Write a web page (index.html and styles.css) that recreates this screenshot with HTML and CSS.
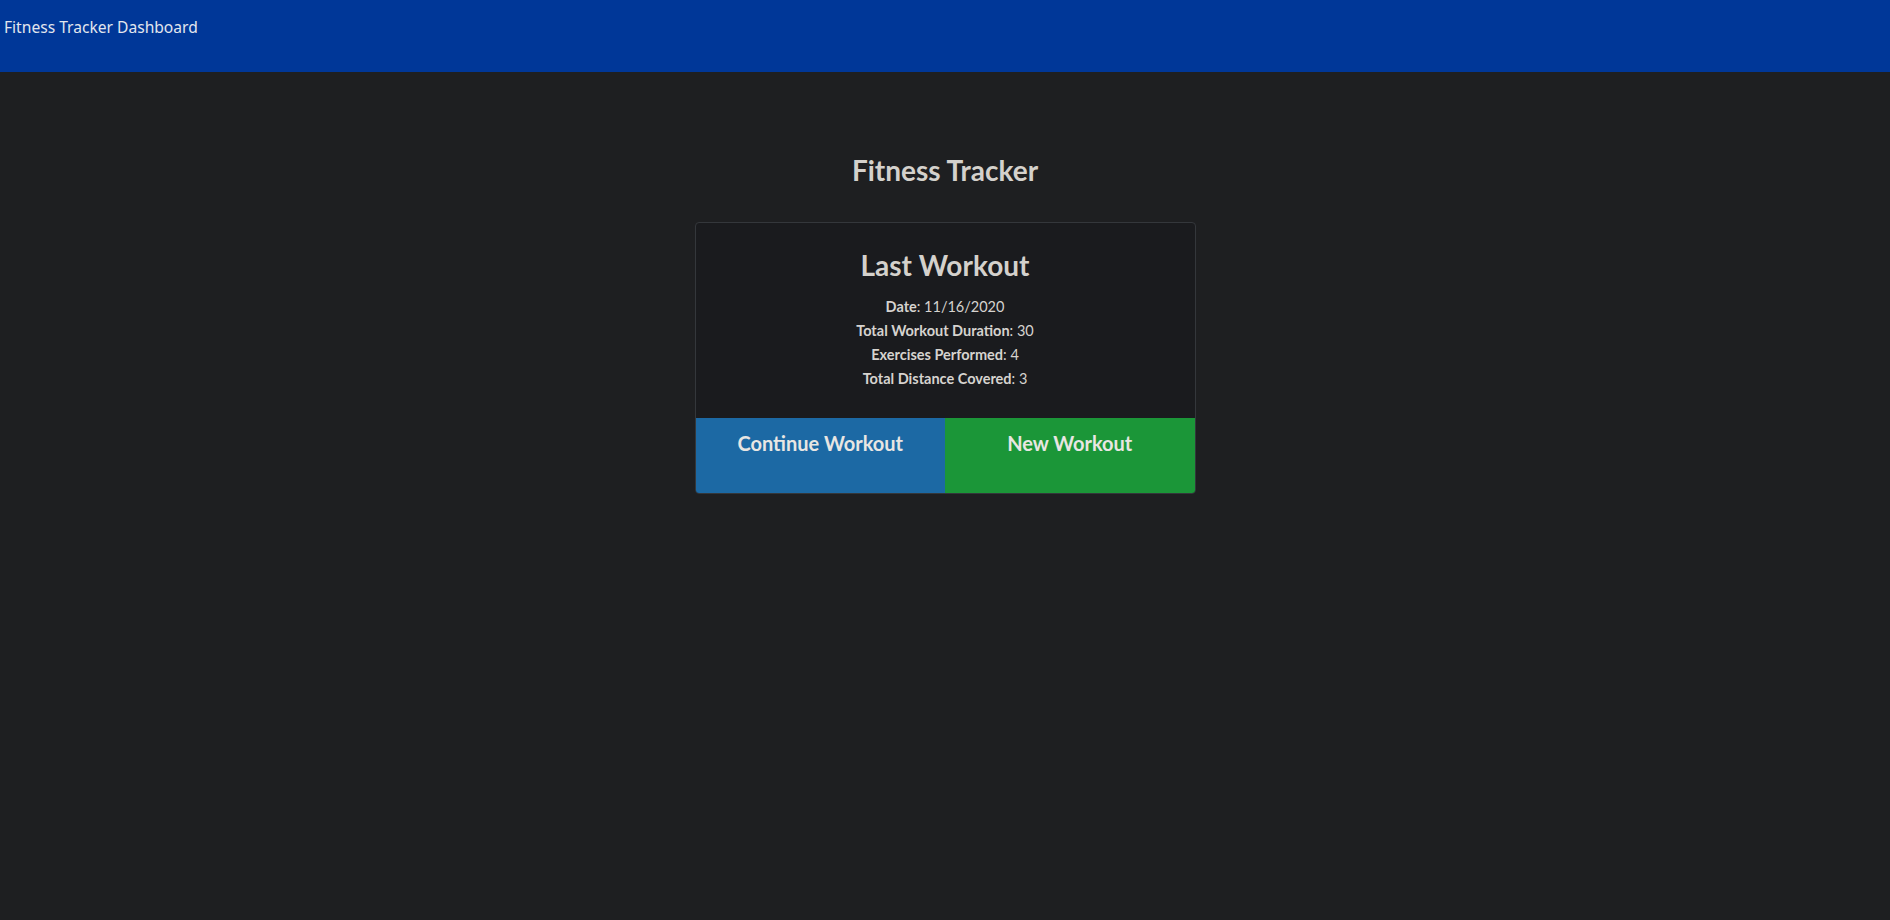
FILE: index.html
```html
<!DOCTYPE html>
<html lang="en">
<head>
<meta charset="utf-8">
<title>Fitness Tracker Dashboard</title>
<link rel="stylesheet" href="styles.css">
</head>
<body>
<header class="navbar">
  <span class="brand">Fitness Tracker Dashboard</span>
</header>
<main class="main">
  <h1 class="page-title">Fitness Tracker</h1>
  <div class="card-wrap">
    <section class="card">
      <div class="card-body">
        <h2 class="card-title">Last Workout</h2>
        <p class="stat"><strong>Date</strong>: 11/16/2020</p>
        <p class="stat"><strong>Total Workout Duration</strong>: 30</p>
        <p class="stat"><strong>Exercises Performed</strong>: 4</p>
        <p class="stat"><strong>Total Distance Covered</strong>: 3</p>
      </div>
      <div class="card-actions">
        <a class="btn btn-continue" href="#">Continue Workout</a>
        <a class="btn btn-new" href="#">New Workout</a>
      </div>
    </section>
  </div>
</main>
</body>
</html>
```

FILE: styles.css
```css
html, body {
  margin: 0;
  padding: 0;
}
body {
  background: #1e1f21;
  color: #d6d3cf;
  font-family: Lato, "Noto Sans", sans-serif;
  min-height: 920px;
}
.navbar {
  height: 72px;
  background: #003798;
  box-sizing: border-box;
  padding: 15px 4px 0;
}
.brand {
  font-family: "Noto Sans", "Open Sans", sans-serif;
  font-size: 15.6px;
  color: #e2e6ee;
  line-height: 24px;
}
.main {
  padding-top: 80px;
}
.page-title {
  margin: 0;
  text-align: center;
  font-size: 28px;
  font-weight: 700;
  line-height: 36px;
  color: #d4d1cc;
}
.card-wrap {
  display: flex;
  justify-content: center;
  margin-top: 34px;
}
.card {
  width: 501px;
  box-sizing: border-box;
  border: 1px solid #34373b;
  border-radius: 4px;
  background: #1a1b1e;
  overflow: hidden;
}
.card-body {
  height: 195px;
  box-sizing: border-box;
  padding-top: 25px;
  text-align: center;
}
.card-title {
  margin: 0 0 13px;
  font-size: 28px;
  line-height: 34px;
  font-weight: 700;
  color: #d4d1cc;
}
.stat {
  margin: 0;
  font-size: 14.5px;
  line-height: 24px;
  color: #d6d3cf;
}
.stat strong {
  font-weight: 700;
}
.card-actions {
  display: flex;
  height: 75px;
}
.btn {
  flex: 1 1 0;
  text-decoration: none;
  text-align: center;
  font-size: 20px;
  font-weight: 700;
  color: #e8e6e3;
  padding-top: 13px;
  line-height: 24px;
}
.btn-continue {
  background: #1c69a4;
}
.btn-new {
  background: #1b9638;
}
```
